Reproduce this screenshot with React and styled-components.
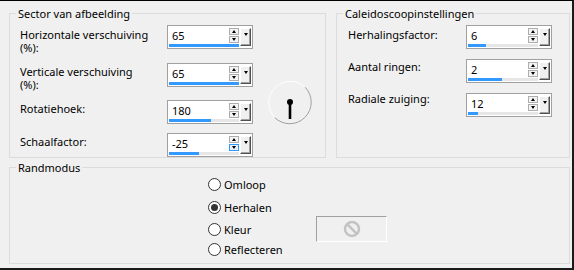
import React from 'react';
import styled, { createGlobalStyle } from 'styled-components';

const Global = createGlobalStyle`
  html, body { margin: 0; padding: 0; background: #f0f0f0; }
  body { font-family: "Noto Sans", "DejaVu Sans", sans-serif; font-size: 11px; }
`;

const Dialog = styled.div`
  box-sizing: border-box;
  width: 574px;
  height: 270px;
  background: #f0f0f0;
  border-top: 1px solid #000;
  border-right: 2px solid #1a1a1a;
  border-bottom: 2px solid #1a1a1a;
  padding: 6px 2px 4px 9px;
  display: flex;
  flex-direction: column;
  gap: 3px;
  color: #000;
  font-family: "Noto Sans", "DejaVu Sans", sans-serif;
  font-size: 11px;
  line-height: 13px;
`;

const TopRow = styled.div`
  display: flex;
  gap: 10px;
  height: 151px;
`;

const Group = styled.fieldset`
  box-sizing: border-box;
  margin: 0;
  padding: 0;
  min-width: 0;
  border: 1px solid #dcdcdc;
  width: ${p => p.$w}px;
  height: ${p => p.$h}px;
`;

const Legend = styled.legend`
  margin-left: 6px;
  padding: 0 2px;
  font-size: 11px;
  line-height: 13px;
`;

const SectorBody = styled.div`
  display: flex;
  align-items: flex-start;
  padding: 5px 0 0 10px;
`;

const Rows = styled.div`
  display: flex;
  flex-direction: column;
  gap: ${p => p.$gap}px;
`;

const Row = styled.div`
  display: flex;
  align-items: flex-start;
`;

const Label = styled.div`
  width: ${p => p.$w}px;
  padding-top: ${p => Math.max(p.$top, 0)}px;
  margin-top: ${p => Math.min(p.$top, 0)}px;
  white-space: nowrap;
`;

const LabelLine = styled.div`
  height: 13px;
  line-height: 13px;
`;

const SpinBox = styled.div`
  box-sizing: border-box;
  width: 86px;
  height: 24px;
  border: 1px solid #a0a0a0;
  background: #fff;
  display: flex;
  padding-right: 1px;
`;

const Field = styled.div`
  width: 71px;
  display: flex;
  flex-direction: column;
  padding-bottom: 1px;
`;

const FieldTop = styled.div`
  height: 18px;
  display: flex;
`;

const Value = styled.div`
  flex: 1;
  padding-left: 4px;
  line-height: 19px;
  font-size: 11px;
`;

const Arrows = styled.div`
  width: 10px;
  margin-top: 2px;
  display: flex;
  flex-direction: column;
  gap: 1px;
`;

const ArrowBtn = styled.div`
  box-sizing: border-box;
  width: 10px;
  height: 7px;
  border: 1px solid ${p => (p.$focus ? '#3399ff' : '#adadad')};
  background: ${p => (p.$focus ? '#e5f1fb' : '#f4f4f4')};
  display: flex;
  align-items: center;
  justify-content: center;
  &::after {
    content: '';
    width: 0;
    height: 0;
    border-left: 2.5px solid transparent;
    border-right: 2.5px solid transparent;
    ${p => (p.$dir === 'up'
      ? 'border-bottom: 3px solid #000;'
      : 'border-top: 3px solid #000;')}
  }
`;

const Track = styled.div`
  width: 70px;
  height: 3px;
  margin-left: 1px;
  background: #e6e6e6;
  display: flex;
`;

const Fill = styled.div`
  height: 3px;
  background: #3399ff;
`;

const DropBtn = styled.div`
  box-sizing: border-box;
  width: 11px;
  height: 18px;
  margin: 2px 0 0 1px;
  background: #f0f0f0;
  border-top: 1px solid #fff;
  border-left: 1px solid #fff;
  border-right: 1px solid #505050;
  border-bottom: 1px solid #505050;
  box-shadow: inset -1px -1px 0 #a0a0a0;
  display: flex;
  justify-content: center;
  padding-top: 4px;
  &::after {
    content: '';
    width: 0;
    height: 0;
    border-left: 2.5px solid transparent;
    border-right: 2.5px solid transparent;
    border-top: 3px solid #000;
  }
`;

const DialWrap = styled.div`
  margin: 55px 0 0 14px;
  width: 46px;
  height: 46px;
`;

const KaleidoBody = styled.div`
  padding: 5px 0 0 11px;
`;

const RandBody = styled.div`
  display: flex;
  align-items: flex-start;
  padding-left: 198px;
`;

const RadioList = styled.div`
  width: 108px;
  display: flex;
  flex-direction: column;
`;

const Radio = styled.div`
  display: flex;
  align-items: center;
  gap: 3px;
  height: 16px;
  margin-top: ${p => p.$mt}px;
`;

const RadioCircle = styled.span`
  box-sizing: border-box;
  width: 13px;
  height: 13px;
  border-radius: 50%;
  border: 1px solid #333;
  background: #fff;
  display: flex;
  align-items: center;
  justify-content: center;
  &::after {
    content: '';
    width: 7px;
    height: 7px;
    border-radius: 50%;
    background: ${p => (p.$checked ? '#333' : 'transparent')};
  }
`;

const Swatch = styled.div`
  box-sizing: border-box;
  width: 71px;
  height: 26px;
  margin-top: 42px;
  border-top: 1px solid #a0a0a0;
  border-left: 1px solid #a0a0a0;
  border-right: 1px solid #fff;
  border-bottom: 1px solid #fff;
  background: #f0f0f0;
  display: flex;
  align-items: center;
  justify-content: center;
`;

function Spin({ value, fill, focusDown }) {
  return (
    <SpinBox>
      <Field>
        <FieldTop>
          <Value>{value}</Value>
          <Arrows>
            <ArrowBtn $dir="up" />
            <ArrowBtn $dir="down" $focus={focusDown} />
          </Arrows>
        </FieldTop>
        <Track>
          <Fill style={{ width: `${fill}px` }} />
        </Track>
      </Field>
      <DropBtn />
    </SpinBox>
  );
}

function Dial() {
  return (
    <DialWrap>
      <svg width="46" height="46" viewBox="0 0 46 46">
        <path d="M7.8 37.7 A21.5 21.5 0 0 1 38.2 7.3" fill="none" stroke="#ffffff" strokeWidth="1" />
        <path d="M38.2 7.3 A21.5 21.5 0 0 1 7.8 37.7" fill="none" stroke="#a0a0a0" strokeWidth="1" />
        <line x1="23" y1="22" x2="23" y2="39" stroke="#000" strokeWidth="2.6" />
        <circle cx="23" cy="22" r="3" fill="#000" />
      </svg>
    </DialWrap>
  );
}

function NoSign() {
  return (
    <svg width="18" height="18" viewBox="0 0 18 18">
      <circle cx="9" cy="9" r="7" fill="none" stroke="#c3c3c3" strokeWidth="2.5" />
      <line x1="4.2" y1="4.2" x2="13.8" y2="13.8" stroke="#c3c3c3" strokeWidth="2.5" />
    </svg>
  );
}

export default function App() {
  return (
    <>
      <Global />
      <Dialog>
        <TopRow>
          <Group $w={317} $h={151}>
            <Legend>Sector van afbeelding</Legend>
            <SectorBody>
              <Rows $gap={9}>
                <Row>
                  <Label $w={147} $top={3}>
                    <LabelLine>Horizontale verschuiving</LabelLine>
                    <LabelLine>(%):</LabelLine>
                  </Label>
                  <Spin value="65" fill={70} />
                </Row>
                <Row>
                  <Label $w={147} $top={2}>
                    <LabelLine>Verticale verschuiving</LabelLine>
                    <LabelLine>(%):</LabelLine>
                  </Label>
                  <Spin value="65" fill={70} />
                </Row>
                <Row>
                  <Label $w={147} $top={2}>Rotatiehoek:</Label>
                  <Spin value="180" fill={42} />
                </Row>
                <Row>
                  <Label $w={147} $top={2}>Schaalfactor:</Label>
                  <Spin value="-25" fill={30} focusDown />
                </Row>
              </Rows>
              <Dial />
            </SectorBody>
          </Group>
          <Group $w={234} $h={151}>
            <Legend>Caleidoscoopinstellingen</Legend>
            <KaleidoBody>
              <Rows $gap={10}>
                <Row>
                  <Label $w={118} $top={3}>Herhalingsfactor:</Label>
                  <Spin value="6" fill={18} />
                </Row>
                <Row>
                  <Label $w={118} $top={1}>Aantal ringen:</Label>
                  <Spin value="2" fill={34} />
                </Row>
                <Row>
                  <Label $w={118} $top={-1}>Radiale zuiging:</Label>
                  <Spin value="12" fill={10} />
                </Row>
              </Rows>
            </KaleidoBody>
          </Group>
        </TopRow>
        <Group $w={561} $h={103}>
          <Legend>Randmodus</Legend>
          <RandBody>
            <RadioList>
              <Radio $mt={2}><RadioCircle />Omloop</Radio>
              <Radio $mt={7}><RadioCircle $checked />Herhalen</Radio>
              <Radio $mt={6}><RadioCircle />Kleur</Radio>
              <Radio $mt={4}><RadioCircle />Reflecteren</Radio>
            </RadioList>
            <Swatch>
              <NoSign />
            </Swatch>
          </RandBody>
        </Group>
      </Dialog>
    </>
  );
}
